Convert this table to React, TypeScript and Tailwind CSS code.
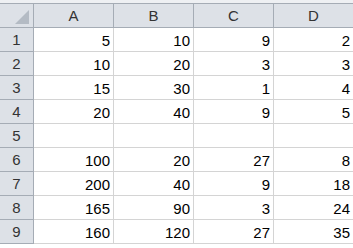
const cols = ["A", "B", "C", "D"];

const rows: (number | null)[][] = [
  [5, 10, 9, 2],
  [10, 20, 3, 3],
  [15, 30, 1, 4],
  [20, 40, 9, 5],
  [null, null, null, null],
  [100, 20, 27, 8],
  [200, 40, 9, 18],
  [165, 90, 3, 24],
  [160, 120, 27, 35],
];

export default function App() {
  return (
    <div className="w-[353px] h-[248px] overflow-hidden bg-white font-['Liberation_Sans',Arial,sans-serif] text-[15px] text-black">
      <div className="h-[4px] bg-[#eef0f3] border-b border-[#a5acb5]" />
      <div className="grid grid-cols-[34px_80px_80px_80px_80px] w-[354px]">
        {/* Header row */}
        <div className="h-[24px] bg-[#dde1e7] border-r border-b border-[#a5acb5] flex items-end justify-end pr-[4px] pb-[3px]">
          <svg width="14" height="14" viewBox="0 0 14 14">
            <polygon points="14,0 14,14 0,14" fill="#b4bbc4" />
          </svg>
        </div>
        {cols.map((c) => (
          <div
            key={c}
            className="h-[24px] bg-[#dde1e7] border-r border-b border-[#a5acb5] flex items-center justify-center pt-[1px] text-[#333]"
          >
            {c}
          </div>
        ))}

        {/* Data rows */}
        {rows.map((r, i) => (
          <div key={i} className="contents">
            <div className="h-[24px] bg-[#dde1e7] border-r border-b border-[#a5acb5] flex items-center justify-center pt-[2px] text-[#333]">
              {i + 1}
            </div>
            {r.map((v, j) => (
              <div
                key={j}
                className="h-[24px] border-r border-b border-[#d4d4d4] flex items-center justify-end pr-[3px] pt-[3px]"
              >
                {v ?? ""}
              </div>
            ))}
          </div>
        ))}
      </div>
    </div>
  );
}
